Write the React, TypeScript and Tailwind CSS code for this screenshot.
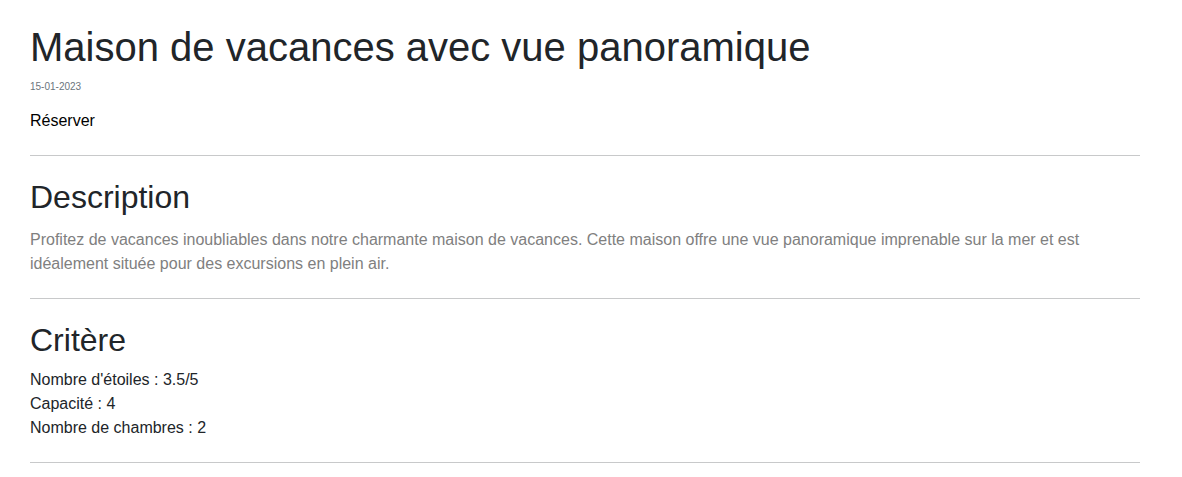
export default function App() {
  return (
    <div className="min-h-screen bg-white" style={{ fontFamily: '"Liberation Sans", Arial, sans-serif' }}>
      <div className="mx-[30px] w-[1110px] pt-[23px]">
        <h1 className="text-[40px] leading-[1.2] text-[#212529]">Maison de vacances avec vue panoramique</h1>
        <p className="mt-2 text-[10px] leading-[15px] text-[#6c757d]">15-01-2023</p>
        <p className="mt-[15px] text-[16px] leading-[1.5] text-black">Réserver</p>
        <hr className="mt-[22px] border-t border-[#c8c9ca]" />
        <h2 className="mt-[22px] text-[32px] leading-[1.2] text-[#212529]">Description</h2>
        <p className="mt-[12px] text-[16px] leading-[1.5] text-[#808080]">
          Profitez de vacances inoubliables dans notre charmante maison de vacances. Cette maison offre une vue panoramique imprenable sur la mer et est idéalement située pour des excursions en plein air.
        </p>
        <hr className="mt-[22px] border-t border-[#c8c9ca]" />
        <h2 className="mt-[22px] text-[32px] leading-[1.2] text-[#212529]">Critère</h2>
        <div className="mt-2 text-[16px] leading-[1.5] text-[#212529]">
          <p>Nombre d'étoiles : 3.5/5</p>
          <p>Capacité : 4</p>
          <p>Nombre de chambres : 2</p>
        </div>
        <hr className="mt-[22px] border-t border-[#c8c9ca]" />
      </div>
    </div>
  );
}
